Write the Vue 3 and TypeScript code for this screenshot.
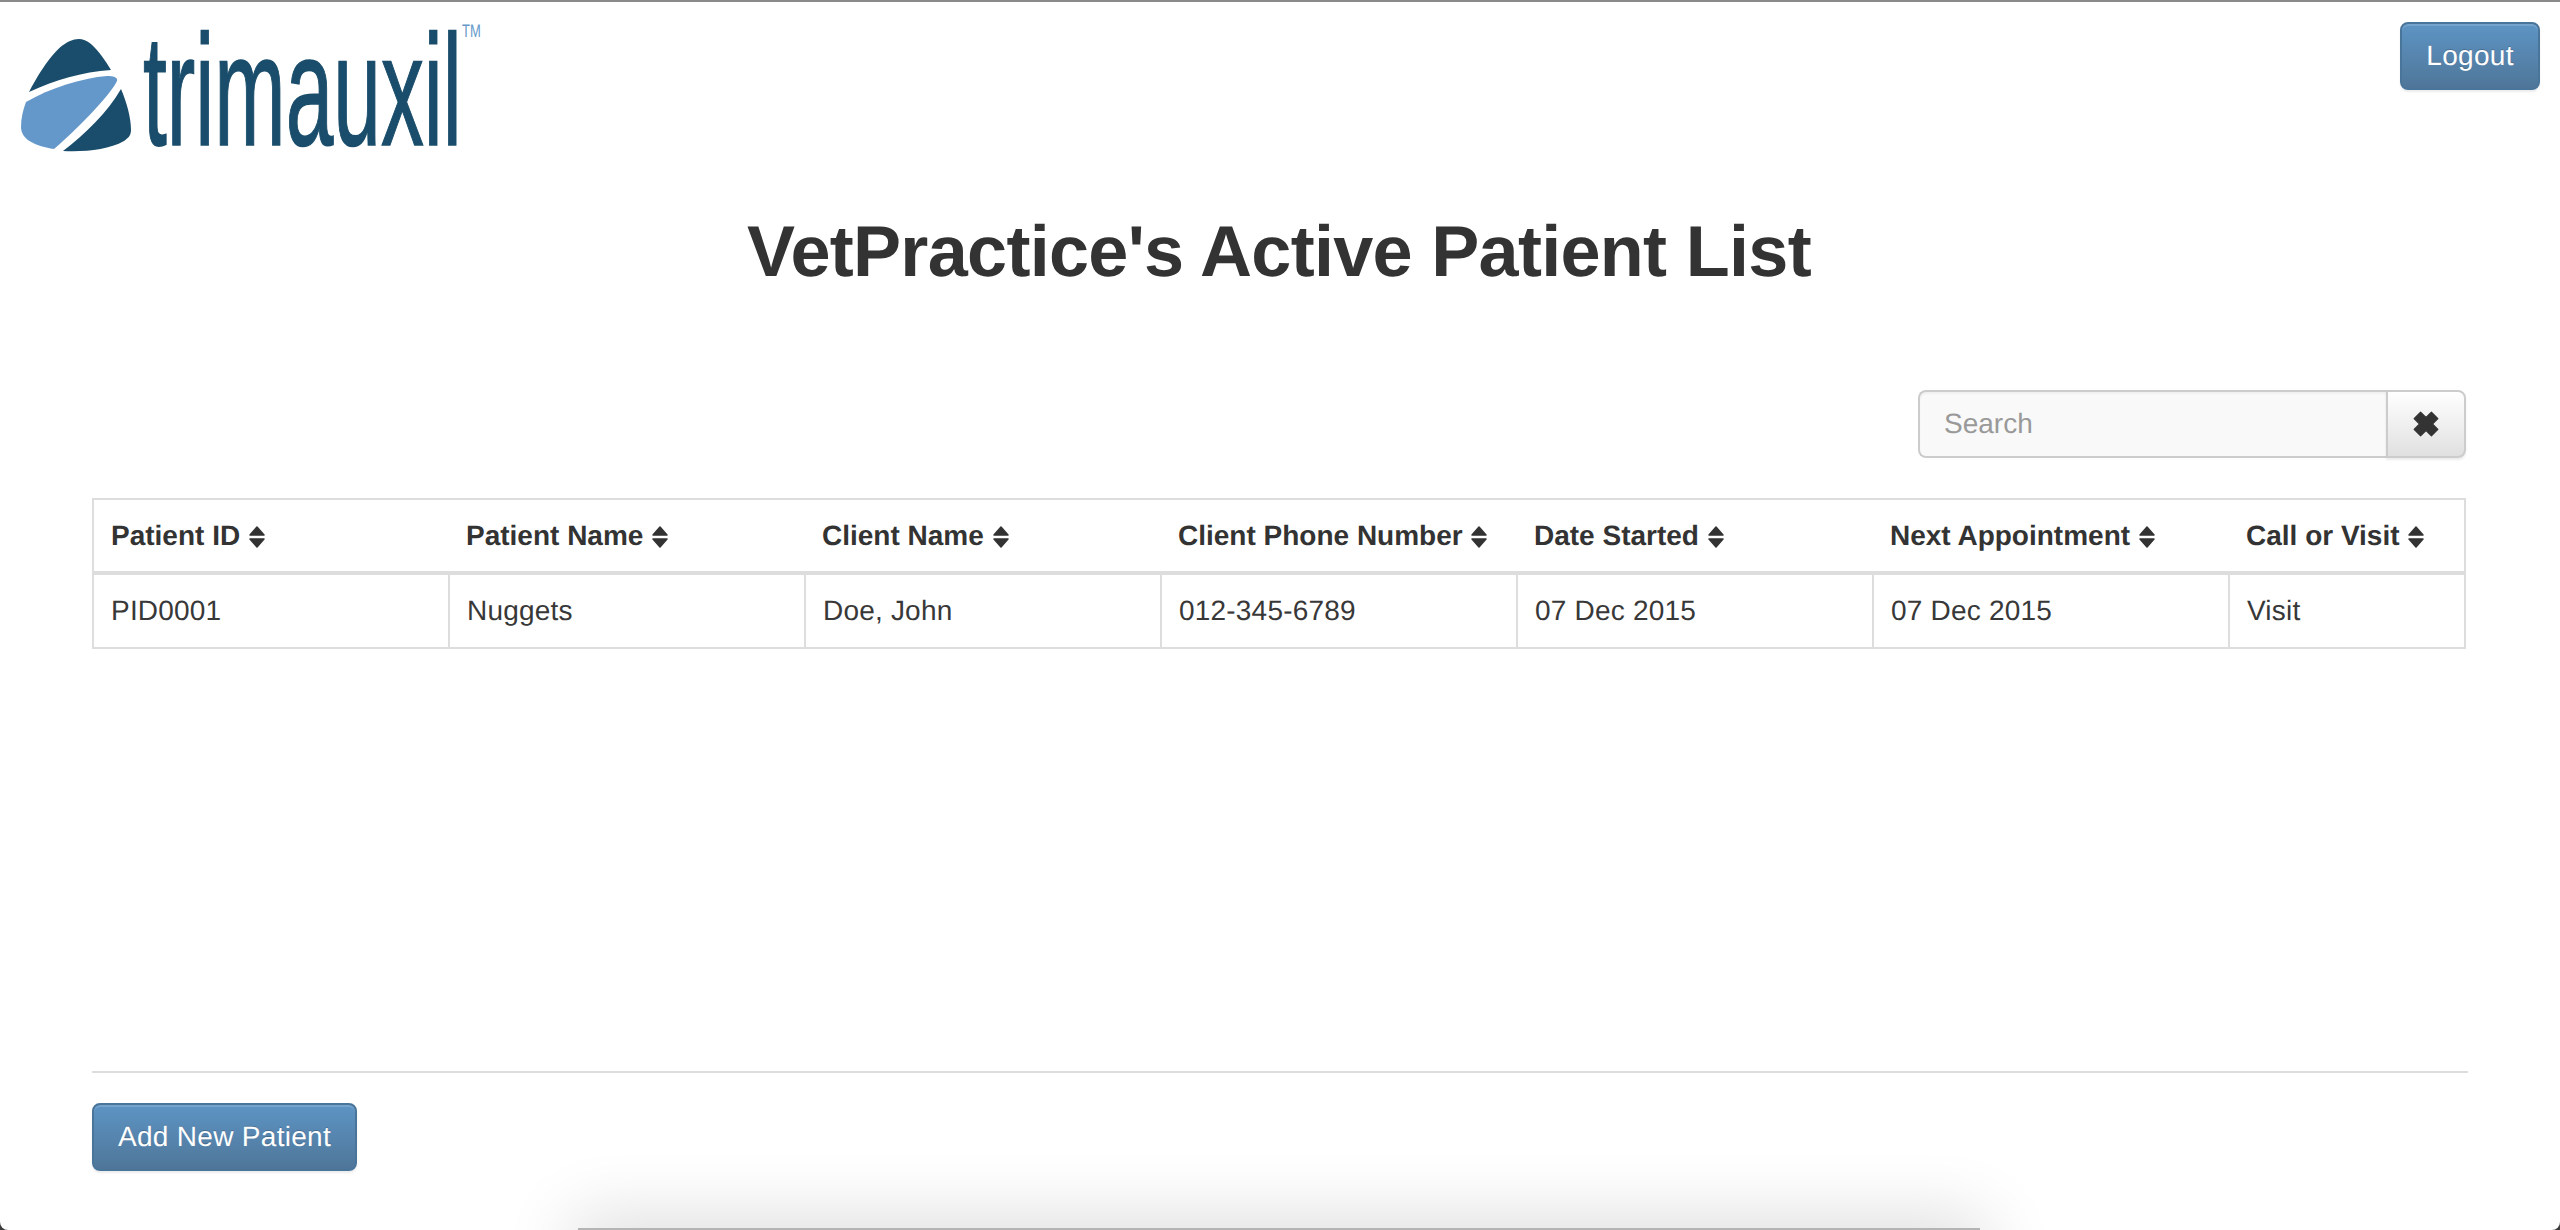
<script setup lang="ts">
const columns = [
  'Patient ID',
  'Patient Name',
  'Client Name',
  'Client Phone Number',
  'Date Started',
  'Next Appointment',
  'Call or Visit'
]

const patients = [
  ['PID0001', 'Nuggets', 'Doe, John', '012-345-6789', '07 Dec 2015', '07 Dec 2015', 'Visit']
]
</script>

<template>
  <div class="page">
    <div class="top-bar">
      <svg class="logo" width="490" height="160" viewBox="0 0 490 160">
        <path d="M29 92C45 62 58 46 70 41C77 38 84 38 91 44C98 50 105 60 111 70C82 72 55 80 29 92Z" fill="#1a4d6b" />
        <path d="M26 102C50 88 82 78 107 76C113 76 118 77 117 81C112 92 85 122 54 149C36 146 21 140 21 127C21 118 23 110 26 102Z" fill="#6598ca" />
        <path d="M121 89C127 103 131 118 131 130C131 136 128 138 124 141C108 150 85 152 63 151C85 134 108 112 121 89Z" fill="#1a4d6b" />
        <text class="logo-word" transform="translate(143 145) scale(0.542 1)">trimauxil</text>
        <text class="logo-tm" transform="translate(462 37) scale(0.72 1)">TM</text>
      </svg>
      <button class="btn logout">Logout</button>
    </div>

    <h1 class="title">VetPractice's Active Patient List</h1>

    <div class="content">
      <div class="search-row">
        <div class="search">
          <input class="search-input" type="text" placeholder="Search" />
          <button class="search-clear">
            <svg width="26" height="26" viewBox="0 0 24 24">
              <path d="M1 7L7 1L12 6L17 1L23 7L18 12L23 17L17 23L12 18L7 23L1 17L6 12Z" fill="#333" stroke="#333" stroke-linejoin="round" />
            </svg>
          </button>
        </div>
      </div>

      <table class="patients">
        <thead>
          <tr>
            <th v-for="col in columns" :key="col">
              {{ col }}
              <svg class="sort" width="18" height="24" viewBox="0 0 18 24">
                <path d="M9 2L16 10H2Z M2 14H16L9 22Z" fill="#333" stroke="#333" stroke-width="1.5" stroke-linejoin="round" />
              </svg>
            </th>
          </tr>
        </thead>
        <tbody>
          <tr v-for="row in patients" :key="row[0]">
            <td v-for="(cell, i) in row" :key="i">{{ cell }}</td>
          </tr>
        </tbody>
      </table>

      <div class="footer">
        <button class="btn">Add New Patient</button>
      </div>
    </div>

    <div class="window-shadow"></div>
    <div class="corner left"></div>
    <div class="corner right"></div>
  </div>
</template>

<style>
html,
body {
  margin: 0;
  background: #fff;
}
</style>

<style scoped>
.page {
  position: relative;
  height: 1230px;
  overflow: hidden;
  background: #fff;
  border-top: 2px solid #8a8a8a;
  box-sizing: border-box;
  font-family: 'Liberation Sans', Arial, sans-serif;
  font-size: 28px;
  color: #333;
  text-rendering: geometricPrecision;
}

.top-bar {
  display: flex;
  justify-content: space-between;
  align-items: flex-start;
  height: 198px;
}

.logo {
  display: block;
  margin-top: -2px;
  overflow: visible;
}

.logo-word {
  font-family: 'Liberation Sans', sans-serif;
  font-size: 158px;
  fill: #1a4d6b;
  stroke: #1a4d6b;
  stroke-width: 1.5px;
}

.logo-tm {
  font-family: 'Liberation Sans', sans-serif;
  font-size: 18px;
  fill: #6598ca;
}

.btn {
  height: 68px;
  padding: 0 24px;
  border: 2px solid #4a759b;
  border-radius: 8px;
  background: linear-gradient(to bottom, #5d94c4, #4f7699);
  box-shadow: inset 0 2px 0 rgba(255, 255, 255, 0.15), 0 2px 2px rgba(0, 0, 0, 0.08);
  color: #fff;
  font-family: inherit;
  font-size: 28px;
  letter-spacing: 0.3px;
  text-shadow: 0 -1px 0 rgba(0, 0, 0, 0.2);
  text-rendering: geometricPrecision;
}

.logout {
  margin: 20px 20px 0 0;
  width: 140px;
  padding: 0;
}

.title {
  margin: 0;
  height: 120px;
  font-size: 72px;
  line-height: 104px;
  font-weight: 700;
  letter-spacing: -0.7px;
  text-align: center;
  color: #333;
  padding-right: 2px;
}

.content {
  padding: 70px 92px 0 92px;
}

.search-row {
  display: flex;
  justify-content: flex-end;
  padding-right: 2px;
}

.search {
  display: flex;
  width: 548px;
  height: 68px;
}

.search-input {
  flex: 1;
  min-width: 0;
  box-sizing: border-box;
  padding: 0 24px;
  border: 2px solid #ccc;
  border-right: 0;
  border-radius: 8px 0 0 8px;
  background: #f9f9f9;
  box-shadow: inset 0 2px 2px rgba(0, 0, 0, 0.04);
  font-family: inherit;
  font-size: 28px;
  color: #333;
  outline: none;
  text-rendering: geometricPrecision;
}

.search-input::placeholder {
  color: #999;
  opacity: 1;
}

.search-clear {
  width: 80px;
  padding: 0;
  display: flex;
  align-items: center;
  justify-content: center;
  border: 2px solid #ccc;
  border-radius: 0 8px 8px 0;
  background: linear-gradient(to bottom, #fff, #e0e0e0);
  box-shadow: 0 2px 2px rgba(0, 0, 0, 0.08);
}

.patients {
  width: 2374px;
  margin-top: 40px;
  border-collapse: collapse;
  table-layout: fixed;
  border: 2px solid #ddd;
}

.patients th {
  width: 356px;
  height: 74px;
  padding: 0 16px 0 17px;
  box-sizing: border-box;
  border-bottom: 4px solid #ddd;
  text-align: left;
  font-weight: 700;
  font-size: 28px;
  white-space: nowrap;
}

.patients th:last-child {
  width: auto;
}

.patients td {
  height: 72px;
  padding: 0 16px 0 17px;
  border: 2px solid #ddd;
  font-size: 28px;
  letter-spacing: 0.2px;
  color: #383838;
}

.sort {
  vertical-align: -4px;
}

.footer {
  margin-top: 422px;
  padding-top: 30px;
  border-top: 2px solid #ddd;
}

.window-shadow {
  position: absolute;
  left: 578px;
  right: 580px;
  bottom: -58px;
  height: 60px;
  box-shadow: 0 -4px 70px 6px rgba(0, 0, 0, 0.14);
  background: #b4b4b4;
}

.corner {
  position: absolute;
  bottom: 0;
  width: 8px;
  height: 8px;
  overflow: hidden;
}

.corner::before {
  content: '';
  position: absolute;
  bottom: 0;
  width: 16px;
  height: 16px;
  border-radius: 50%;
  box-shadow: 0 0 0 10px #3c3c3c;
}

.corner.left {
  left: 0;
}

.corner.left::before {
  left: 0;
}

.corner.right {
  right: 0;
}

.corner.right::before {
  right: 0;
}
</style>
